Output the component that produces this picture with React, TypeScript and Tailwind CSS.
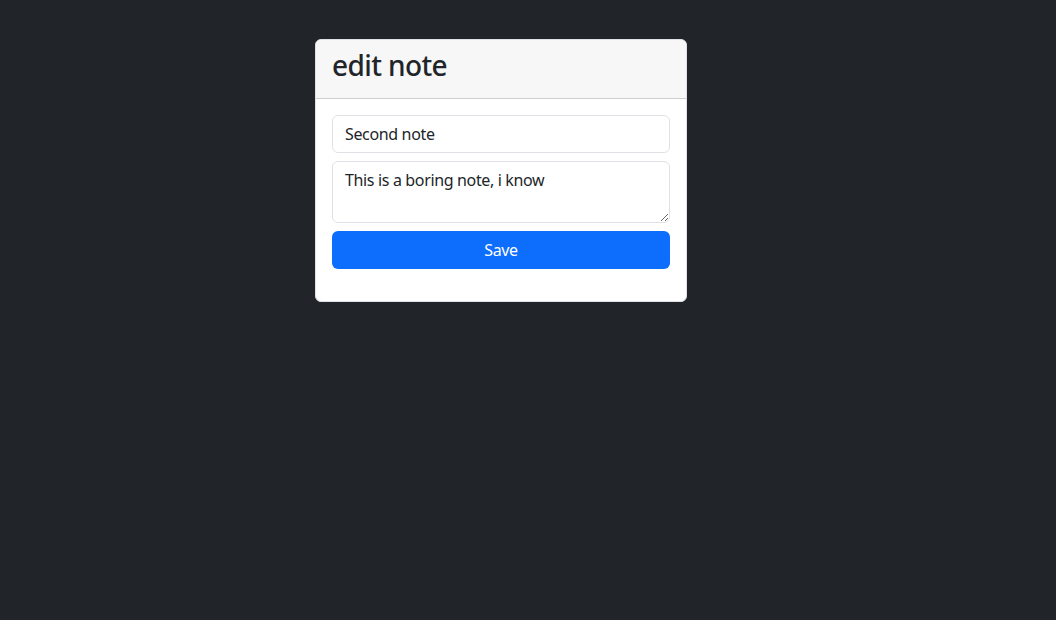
export default function App() {
  return (
    <div className="min-h-[620px] bg-[#212529] pl-[315px] pt-[39px] font-['Noto_Sans',sans-serif] text-[#212529]">
      <div className="w-[372px] overflow-hidden rounded-[6px] border border-[#dee2e6] bg-white">
        {/* Header */}
        <div className="border-b border-[#cfcfcf] bg-[#f7f7f7] px-4 pb-2 pt-[9px]">
          <h3 className="mb-[7px] text-[28px] font-medium leading-[1.2] tracking-[-0.6px]">edit note</h3>
        </div>

        {/* Body */}
        <div className="flex flex-col gap-2 p-4 pb-8">
          <input
            defaultValue="Second note"
            className="h-[38px] rounded-[6px] border border-[#dee2e6] bg-white px-3 text-base leading-6 tracking-[-0.35px] text-[#212529] outline-none"
          />
          <textarea
            rows={2}
            defaultValue="This is a boring note, i know"
            className="h-[62px] rounded-[6px] border border-[#dee2e6] bg-white px-3 py-1.5 text-base leading-6 tracking-[-0.35px] text-[#212529] outline-none"
          />
          <button className="h-[38px] rounded-[6px] bg-[#0d6efd] text-base tracking-[-0.35px] text-white">
            Save
          </button>
        </div>
      </div>
    </div>
  );
}
